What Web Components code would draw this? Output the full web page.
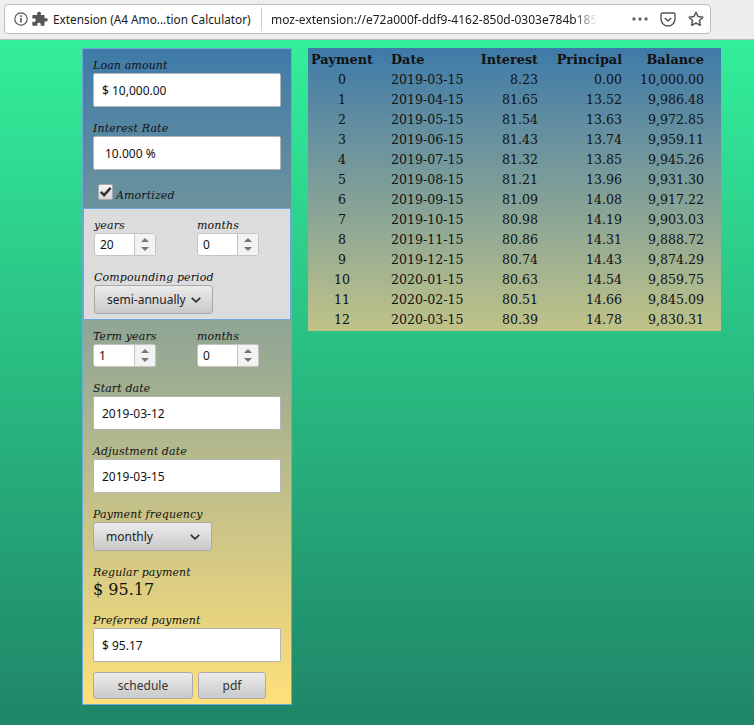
<!DOCTYPE html>
<html>
<head>
<meta charset="utf-8">
<title>A4 Amortization Calculator</title>
<style>
    html, body {
        margin: 0;
        height: 725px;
        overflow: hidden;
    }

    body {
        font-family: "DejaVu Serif", serif;
        color: #111;
    }

    app-page {
        height: 725px;
    }
</style>
</head>
<body>
<app-page>
    <browser-bar slot="bar"></browser-bar>
    <form-panel slot="panel">
        <form-field label="Loan amount"><text-box>$ 10,000.00</text-box></form-field>
        <form-field label="Interest Rate"><text-box indent>10.000 %</text-box></form-field>
        <check-row>Amortized</check-row>
        <gray-section>
            <spin-row first="years" firstvalue="20" secondvalue="0"></spin-row>
            <form-field label="Compounding period"><drop-down style="width:119px">semi-annually</drop-down></form-field>
        </gray-section>
        <spin-row wide first="Term years" firstvalue="1" secondvalue="0"></spin-row>
        <form-field label="Start date"><text-box>2019-03-12</text-box></form-field>
        <form-field label="Adjustment date"><text-box>2019-03-15</text-box></form-field>
        <form-field label="Payment frequency"><drop-down spread style="width:119px">monthly</drop-down></form-field>
        <form-field label="Regular payment"><money-value>$ 95.17</money-value></form-field>
        <form-field label="Preferred payment"><text-box>$ 95.17</text-box></form-field>
        <button-row>
            <app-button style="width:100px">schedule</app-button>
            <app-button style="width:68px">pdf</app-button>
        </button-row>
    </form-panel>
    <schedule-table slot="table"></schedule-table>
</app-page>

<script>
const controlFont = `"Noto Sans", sans-serif`;

class AppPage extends HTMLElement {
    constructor() {
        super();
        this.attachShadow({ mode: "open" });
        this.shadowRoot.innerHTML = `
            <style>
                :host {
                    display: flex;
                    flex-direction: column;
                    background: linear-gradient(#33ee9a 40px, #1f8568);
                }
                .content {
                    display: flex;
                    align-items: flex-start;
                    gap: 16px;
                    padding: 8px 0 0 82px;
                }
            </style>
            <slot name="bar"></slot>
            <div class="content">
                <slot name="panel"></slot>
                <slot name="table"></slot>
            </div>
        `;
    }
}

class BrowserBar extends HTMLElement {
    constructor() {
        super();
        this.attachShadow({ mode: "open" });
        this.shadowRoot.innerHTML = `
            <style>
                :host {
                    display: block;
                    height: 40px;
                    box-sizing: border-box;
                    padding: 4px 43px 0 4px;
                    background: #eeeeec;
                    border-bottom: 1px solid #bdb9b9;
                    font: 12px "Noto Sans", sans-serif;
                    color: #1a1a1a;
                }
                .url {
                    height: 30px;
                    box-sizing: border-box;
                    display: flex;
                    align-items: center;
                    background: #fff;
                    border: 1px solid #bdbdbb;
                    border-radius: 4px;
                    padding-left: 9px;
                }
                .site {
                    margin-left: 5px;
                    white-space: nowrap;
                    width: 198px;
                    font-size: 11.8px;
                }
                .sep {
                    width: 1px;
                    height: 24px;
                    background: #cfcfcf;
                    margin: 0 9px 0 10px;
                }
                .address {
                    width: 326px;
                    white-space: nowrap;
                    -webkit-mask-image: linear-gradient(to right, #000 303px, transparent);
                    mask-image: linear-gradient(to right, #000 303px, transparent);
                }
                .tools {
                    display: flex;
                    align-items: center;
                    margin-left: 35px;
                    gap: 12px;
                }
                svg { display: block; flex: none; }
            </style>
            <div class="url">
                <svg width="14" height="14" viewBox="0 0 14 14" fill="none" stroke="#555">
                    <circle cx="7" cy="7" r="6.2" stroke-width="1.2"/>
                    <path d="M7 6v4.4" stroke-width="1.6"/>
                    <path d="M7 3.2v1.7" stroke-width="1.6"/>
                </svg>
                <svg style="margin-left:4px" width="16" height="16" viewBox="0 0 16 16" fill="#555">
                    <path d="M6 1.2c1.2-.8 3-.2 3 1.2 0 .6-.4 1-.4 1.6h3.9v3.4c.6 0 1-.4 1.6-.4 1.4 0 2 1.8 1.2 3-.6.8-2 .8-2.8.2v4.6H8.4c0-.6.5-1 .5-1.6 0-1.4-1.9-2-3-1.2-.8.6-.8 1.9-.2 2.8H.4v-4.4c.6 0 1 .6 1.8.5 1.4-.1 2-2 1.2-3-.7-.8-2-.7-3-.1V4H5.400c0-.8-.4-.9-.4-1.500 0-.5.4-1 1-1.300z"/>
                </svg>
                <span class="site">Extension (A4 Amo...tion Calculator)</span>
                <span class="sep"></span>
                <span class="address">moz-extension://e72a000f-ddf9-4162-850d-0303e784b185</span>
                <span class="tools">
                    <svg width="16" height="4" viewBox="0 0 16 4" fill="#666">
                        <circle cx="2" cy="2" r="1.7"/><circle cx="8" cy="2" r="1.7"/><circle cx="14" cy="2" r="1.7"/>
                    </svg>
                    <svg width="16" height="15" viewBox="0 0 16 15" fill="none" stroke="#555" stroke-width="1.400">
                        <path d="M2.300 1h11.400c.7 0 1.300.6 1.300 1.300V7c0 3.700-3.100 7-7 7s-7-3.300-7-7V2.300C1 1.600 1.600 1 2.300 1z"/>
                        <path d="M4.800 6l3.200 3 3.200-3" stroke-width="1.600"/>
                    </svg>
                    <svg width="16" height="16" viewBox="0 0 16 16" fill="none" stroke="#555" stroke-width="1.500" stroke-linejoin="round">
                        <path d="M8 1.200l2.100 4.400 4.800.6-3.500 3.300.9 4.800L8 12l-4.300 2.300.9-4.800L1.100 6.200l4.800-.6z"/>
                    </svg>
                </span>
            </div>
        `;
    }
}

class FormPanel extends HTMLElement {
    constructor() {
        super();
        this.attachShadow({ mode: "open" });
        this.shadowRoot.innerHTML = `
            <style>
                :host {
                    display: flex;
                    flex-direction: column;
                    width: 210px;
                    height: 657px;
                    box-sizing: border-box;
                    padding: 8px 10px 5px 10px;
                    border: 1px solid #6fa8d8;
                    background: linear-gradient(#3e7aa9, #ffe07a);
                }
            </style>
            <slot></slot>
        `;
    }
}

class FormField extends HTMLElement {
    constructor() {
        super();
        this.attachShadow({ mode: "open" });
        this.shadowRoot.innerHTML = `
            <style>
                :host {
                    display: block;
                    margin-bottom: 13px;
                }
                label {
                    display: block;
                    height: 16px;
                    font: italic 11px/18px "DejaVu Serif", serif;
                    letter-spacing: 0.12px;
                    color: #111;
                    white-space: nowrap;
                }
            </style>
            <label></label>
            <slot></slot>
        `;
        this.shadowRoot.querySelector("label").textContent = this.getAttribute("label");
    }
}

class TextBox extends HTMLElement {
    constructor() {
        super();
        this.attachShadow({ mode: "open" });
        this.shadowRoot.innerHTML = `
            <style>
                :host {
                    display: flex;
                    align-items: center;
                    height: 34px;
                    width: 188px;
                    box-sizing: border-box;
                    padding-left: 8px;
                    background: #fff;
                    border: 1px solid #b5b5b5;
                    border-radius: 2px;
                    font: 12px ${controlFont};
                    color: #111;
                }
                :host([indent]) { padding-left: 11px; }
            </style>
            <slot></slot>
        `;
    }
}

class CheckRow extends HTMLElement {
    constructor() {
        super();
        this.attachShadow({ mode: "open" });
        this.shadowRoot.innerHTML = `
            <style>
                :host {
                    display: flex;
                    align-items: flex-end;
                    height: 38px;
                    margin-top: -13px;
                    box-sizing: border-box;
                    padding: 0 0 5px 5px;
                    font: italic 11px/14px "DejaVu Serif", serif;
                    letter-spacing: 0.12px;
                }
                .box {
                    width: 13px;
                    height: 14px;
                    margin: 0 3px 3px 0;
                    background: linear-gradient(#f5f5f5, #d8d8d8);
                    border: 1px solid #aaa;
                    border-radius: 2px;
                }
                svg { display: block; }
            </style>
            <span class="box">
                <svg width="13" height="14" viewBox="0 0 13 14" fill="none" stroke="#333" stroke-width="2.600">
                    <path d="M1.800 6.800l3.300 3.300 6.500-7.200"/>
                </svg>
            </span>
            <slot></slot>
        `;
    }
}

class GraySection extends HTMLElement {
    constructor() {
        super();
        this.attachShadow({ mode: "open" });
        this.shadowRoot.innerHTML = `
            <style>
                :host {
                    display: flex;
                    flex-direction: column;
                    height: 112px;
                    box-sizing: border-box;
                    margin: 0 -10px 8px -10px;
                    padding: 8px 10px 0 10px;
                    background: #dcdcdc;
                    border: 1px solid #6fa8d8;
                }
            </style>
            <slot></slot>
        `;
    }
}

class SpinRow extends HTMLElement {
    constructor() {
        super();
        this.attachShadow({ mode: "open" });
        this.shadowRoot.innerHTML = `
            <style>
                :host {
                    display: flex;
                }
                .col { flex: none; width: 103px; }
                :host([wide]) .lead { width: 104px; }
                :host([wide]) .lead spin-box { width: 63px; }
            </style>
            <div class="col lead">
                <form-field class="a"><spin-box class="a"></spin-box></form-field>
            </div>
            <div class="col">
                <form-field label="months"><spin-box class="b"></spin-box></form-field>
            </div>
        `;
        const first = this.shadowRoot.querySelector("form-field.a");
        first.shadowRoot.querySelector("label").textContent = this.getAttribute("first");
        this.shadowRoot.querySelector("spin-box.a").textContent = this.getAttribute("firstvalue");
        this.shadowRoot.querySelector("spin-box.b").textContent = this.getAttribute("secondvalue");
    }
}

class SpinBox extends HTMLElement {
    constructor() {
        super();
        this.attachShadow({ mode: "open" });
        this.shadowRoot.innerHTML = `
            <style>
                :host {
                    display: flex;
                    width: 62px;
                    height: 23px;
                    box-sizing: border-box;
                    background: #fff;
                    border: 1px solid #c4c4c4;
                    border-radius: 3px;
                    font: 12px ${controlFont};
                    color: #111;
                }
                .value {
                    flex: 1;
                    padding-left: 5px;
                    line-height: 21px;
                }
                .arrows {
                    width: 20px;
                    display: flex;
                    flex-direction: column;
                    align-items: center;
                    justify-content: center;
                    gap: 5px;
                    background: #f2f2f2;
                    border-left: 1px solid #c4c4c4;
                }
                .up, .down {
                    width: 0;
                    height: 0;
                    border-left: 4px solid transparent;
                    border-right: 4px solid transparent;
                }
                .up { border-bottom: 4px solid #777; }
                .down { border-top: 4px solid #777; }
            </style>
            <span class="value"><slot></slot></span>
            <span class="arrows"><span class="up"></span><span class="down"></span></span>
        `;
    }
}

class DropDown extends HTMLElement {
    constructor() {
        super();
        this.attachShadow({ mode: "open" });
        this.shadowRoot.innerHTML = `
            <style>
                :host {
                    display: flex;
                    align-items: center;
                    gap: 5px;
                    height: 29px;
                    box-sizing: border-box;
                    padding-left: 12px;
                    background: linear-gradient(#ececec, #c9c9c9);
                    border: 1px solid #a9a9a9;
                    border-radius: 3px;
                    font: 12px ${controlFont};
                    color: #222;
                    white-space: nowrap;
                }
                :host([spread]) { justify-content: space-between; padding-right: 11px; }
                svg { display: block; flex: none; }
            </style>
            <span><slot></slot></span>
            <svg width="10" height="6" viewBox="0 0 10 6" fill="none" stroke="#333" stroke-width="1.800">
                <path d="M.8 .8l4.200 4 4.200-4"/>
            </svg>
        `;
    }
}

class MoneyValue extends HTMLElement {
    constructor() {
        super();
        this.attachShadow({ mode: "open" });
        this.shadowRoot.innerHTML = `
            <style>
                :host {
                    display: block;
                    height: 19px;
                    font: 16px/19px "DejaVu Serif", serif;
                    color: #111;
                }
            </style>
            <slot></slot>
        `;
    }
}

class ButtonRow extends HTMLElement {
    constructor() {
        super();
        this.attachShadow({ mode: "open" });
        this.shadowRoot.innerHTML = `
            <style>
                :host {
                    display: flex;
                    gap: 5px;
                    margin-top: -3px;
                }
            </style>
            <slot></slot>
        `;
    }
}

class AppButton extends HTMLElement {
    constructor() {
        super();
        this.attachShadow({ mode: "open" });
        this.shadowRoot.innerHTML = `
            <style>
                :host {
                    display: flex;
                    align-items: center;
                    justify-content: center;
                    height: 27px;
                    box-sizing: border-box;
                    background: linear-gradient(#ececec, #c9c9c9);
                    border: 1px solid #a9a9a9;
                    border-radius: 3px;
                    font: 12px ${controlFont};
                    color: #333;
                }
            </style>
            <slot></slot>
        `;
    }
}

const rows = [
    ["0", "2019-03-15", "8.23", "0.00", "10,000.00"],
    ["1", "2019-04-15", "81.65", "13.52", "9,986.48"],
    ["2", "2019-05-15", "81.54", "13.63", "9,972.85"],
    ["3", "2019-06-15", "81.43", "13.74", "9,959.11"],
    ["4", "2019-07-15", "81.32", "13.85", "9,945.26"],
    ["5", "2019-08-15", "81.21", "13.96", "9,931.30"],
    ["6", "2019-09-15", "81.09", "14.08", "9,917.22"],
    ["7", "2019-10-15", "80.98", "14.19", "9,903.03"],
    ["8", "2019-11-15", "80.86", "14.31", "9,888.72"],
    ["9", "2019-12-15", "80.74", "14.43", "9,874.29"],
    ["10", "2020-01-15", "80.63", "14.54", "9,859.75"],
    ["11", "2020-02-15", "80.51", "14.66", "9,845.09"],
    ["12", "2020-03-15", "80.39", "14.78", "9,830.31"]
];

class ScheduleTable extends HTMLElement {
    constructor() {
        super();
        this.attachShadow({ mode: "open" });
        const heads = ["Payment", "Date", "Interest", "Principal", "Balance"];
        const cell = (text, i, head) => `<div class="c${i}${head ? " head" : ""}">${text}</div>`;
        this.shadowRoot.innerHTML = `
            <style>
                :host {
                    display: grid;
                    grid-template-columns: 80px 72px 75px 84px 82px;
                    grid-auto-rows: 20px;
                    width: 413px;
                    height: 283px;
                    box-sizing: border-box;
                    padding: 2px 17px 0 3px;
                    background: linear-gradient(#3e7aa9, #c0c388);
                    font: 12.6px/20px "DejaVu Serif", serif;
                    color: #111;
                    white-space: nowrap;
                }
                .c0 { text-align: center; padding-right: 18px; }
                .c1 { text-align: left; }
                .c2, .c3, .c4 { text-align: right; }
                .head { font-weight: bold; font-size: 12.8px; }
            </style>
            ${heads.map((h, i) => cell(h, i, true)).join("")}
            ${rows.map(r => r.map((t, i) => cell(t, i, false)).join("")).join("")}
        `;
    }
}

window.customElements.define("app-page", AppPage);
window.customElements.define("browser-bar", BrowserBar);
window.customElements.define("form-panel", FormPanel);
window.customElements.define("form-field", FormField);
window.customElements.define("text-box", TextBox);
window.customElements.define("check-row", CheckRow);
window.customElements.define("gray-section", GraySection);
window.customElements.define("spin-box", SpinBox);
window.customElements.define("spin-row", SpinRow);
window.customElements.define("drop-down", DropDown);
window.customElements.define("money-value", MoneyValue);
window.customElements.define("button-row", ButtonRow);
window.customElements.define("app-button", AppButton);
window.customElements.define("schedule-table", ScheduleTable);
</script>
</body>
</html>
